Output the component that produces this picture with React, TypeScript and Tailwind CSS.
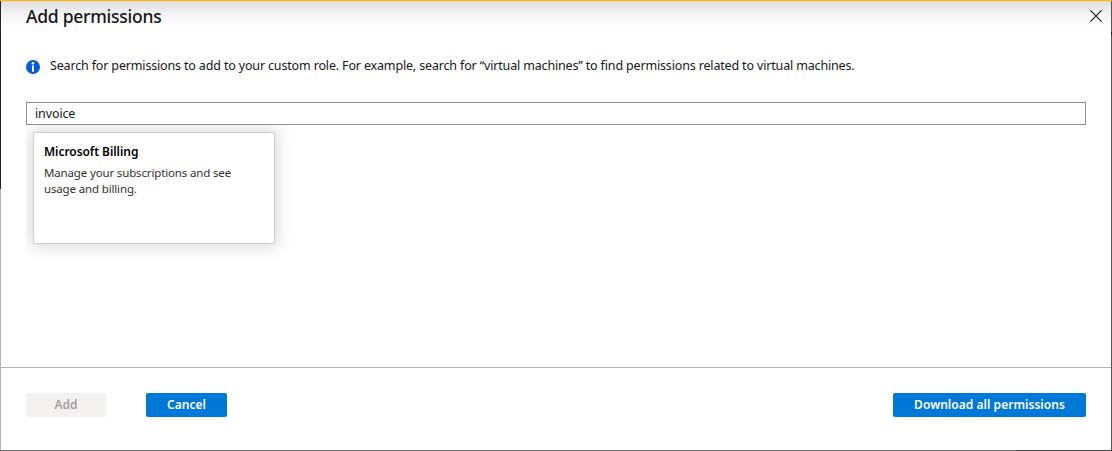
import React from "react";

function InfoIcon() {
  return (
    <svg width="14" height="14" viewBox="0 0 14 14" className="mt-[8px] block shrink-0">
      <circle cx="7" cy="7" r="7" fill="#015cda" />
      <circle cx="7" cy="3.3" r="1.3" fill="#fff" />
      <rect x="6" y="5.5" width="2" height="6.2" fill="#fff" />
    </svg>
  );
}

function CloseIcon() {
  return (
    <svg width="12" height="12" viewBox="0 0 12 12" className="block">
      <path d="M0.3 0.3 L11.7 11.7 M11.7 0.3 L0.3 11.7" stroke="#1b1b1b" strokeWidth="1.15" fill="none" />
    </svg>
  );
}

export default function App() {
  return (
    <div className="flex h-[451px] w-[1112px] flex-col overflow-hidden bg-white font-['Noto_Sans',sans-serif] text-[#161616]">
      <div className="h-px shrink-0 bg-[#ffb900]" />
      <div className="flex min-h-0 flex-1">
        <div className="flex w-px flex-col">
          <div className="h-[188px] bg-[#252525]" />
          <div className="flex-1 bg-[#b5b5b5]" />
        </div>
        <div className="flex min-w-0 flex-1 flex-col">
          <header className="flex h-[26px] shrink-0 items-start justify-between bg-linear-to-b from-[#dedede] via-[#f3f3f3] to-white pr-[9px] pl-[25px]">
            <h1 className="mt-[3px] text-[17.5px] leading-[24px] font-medium tracking-[-0.25px] whitespace-nowrap">Add permissions</h1>
            <button aria-label="Close" className="mt-[9px]">
              <CloseIcon />
            </button>
          </header>
          <main className="flex flex-1 flex-col px-[25px] pt-[25px]">
            <div className="flex h-[30px] gap-[10px]">
              <InfoIcon />
              <p className="mt-[4px] text-[12.5px] leading-[20px] tracking-[-0.157px] whitespace-nowrap">
                Search for permissions to add to your custom role. For example, search for “virtual machines” to find permissions related to virtual machines.
              </p>
            </div>
            <input
              defaultValue="invoice"
              className="mt-[20px] h-[23px] w-full border border-[#8f8f8f] px-2 text-[12.5px] leading-[20px] tracking-[-0.12px] outline-none"
            />
            <div className="flex-1 overflow-hidden pt-[7px] pl-[7px]">
              <div className="h-[112px] w-[242px] border border-[#cccccc] bg-white px-[10px] pt-[11px] shadow-[0_0_16px_2px_rgba(0,0,0,0.16)]">
                <h2 className="text-[12px] leading-[16px] font-semibold tracking-[-0.06px] whitespace-nowrap text-black">Microsoft Billing</h2>
                <p className="mt-[5px] text-[11.5px] leading-[16px] tracking-[-0.15px] whitespace-nowrap text-[#323130]">
                  Manage your subscriptions and see
                  <br />
                  usage and billing.
                </p>
              </div>
            </div>
          </main>
          <footer className="flex h-[83px] shrink-0 border-t border-[#b5b5b5] px-[25px] pt-[25px] text-[12px] leading-[24px] font-semibold">
            <button disabled className="h-6 w-20 rounded-[2px] bg-[#f3f2f1] text-[#a19f9d]">
              Add
            </button>
            <button className="ml-10 h-6 w-[81px] rounded-[2px] bg-[#0078d7] text-white">Cancel</button>
            <button className="ml-auto h-6 w-[193px] rounded-[2px] bg-[#0078d7] tracking-[0.04px] whitespace-nowrap text-white">
              Download all permissions
            </button>
          </footer>
        </div>
        <div className="flex w-px flex-col bg-[#555555]">
          <div className="mt-[31px] h-[3px] bg-[#222222]" />
        </div>
      </div>
      <div className="flex h-px shrink-0 bg-[#6b6b6b]">
        <div className="ml-auto w-[96px] bg-[#444444]" />
      </div>
    </div>
  );
}
